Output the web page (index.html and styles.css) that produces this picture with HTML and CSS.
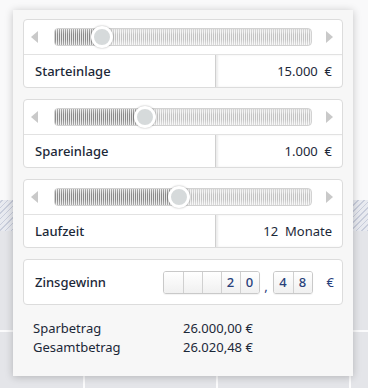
FILE: index.html
```html
<!DOCTYPE html>
<html lang="de">
<head>
<meta charset="utf-8">
<link rel="stylesheet" href="styles.css">
</head>
<body>
<div class="panel">
  <div class="card">
    <div class="slider-row">
      <span class="arrow arrow-left"></span>
      <div class="track">
        <div class="fill" style="width:47px"></div>
        <span class="thumb" style="left:47px"></span>
      </div>
      <span class="arrow arrow-right"></span>
    </div>
    <div class="input-row">
      <span class="label">Starteinlage</span>
      <span class="value">15.000&nbsp;&nbsp;€</span>
    </div>
  </div>
  <div class="card">
    <div class="slider-row">
      <span class="arrow arrow-left"></span>
      <div class="track">
        <div class="fill" style="width:90px"></div>
        <span class="thumb" style="left:90px"></span>
      </div>
      <span class="arrow arrow-right"></span>
    </div>
    <div class="input-row">
      <span class="label">Spareinlage</span>
      <span class="value">1.000&nbsp;&nbsp;€</span>
    </div>
  </div>
  <div class="card">
    <div class="slider-row">
      <span class="arrow arrow-left"></span>
      <div class="track">
        <div class="fill" style="width:124px"></div>
        <span class="thumb" style="left:124px"></span>
      </div>
      <span class="arrow arrow-right"></span>
    </div>
    <div class="input-row">
      <span class="label">Laufzeit</span>
      <span class="value">12&nbsp;&nbsp;Monate</span>
    </div>
  </div>
  <div class="card result">
    <span class="label">Zinsgewinn</span>
    <div class="digits">
      <span class="digit"></span><span class="digit"></span><span class="digit"></span><span class="digit">2</span><span class="digit">0</span>
    </div>
    <span class="comma">,</span>
    <div class="digits">
      <span class="digit">4</span><span class="digit">8</span>
    </div>
    <span class="euro">€</span>
  </div>
  <div class="summary">
    <span>Sparbetrag</span><span>26.000,00 €</span>
    <span>Gesamtbetrag</span><span>26.020,48 €</span>
  </div>
</div>
</body>
</html>
```
FILE: styles.css
```css
* { box-sizing: border-box; }
html, body { margin: 0; padding: 0; }
body {
  width: 368px;
  height: 388px;
  overflow: hidden;
  font-family: "Noto Sans", "Open Sans", sans-serif;
  color: #1c2838;
  background:
    repeating-linear-gradient(90deg, transparent 0 83px, #fbfbfc 83px 85px, transparent 85px 133px) 0 232px / 100% 156px no-repeat,
    linear-gradient(#fbfbfc, #fbfbfc) 0 330px / 100% 2px no-repeat,
    repeating-linear-gradient(-45deg, #c8cddb 0 1px, #e8eaf0 1px 4px) 0 200px / 100% 31px no-repeat,
    linear-gradient(#e4e5e9, #e4e5e9) 0 231px / 100% 157px no-repeat,
    #f9f9fa;
}
.panel {
  margin: 10px 0 0 13px;
  width: 340px;
  height: 366px;
  padding: 9px 10px 0;
  background: #f7f7f7;
  box-shadow: 0 1px 8px rgba(0, 0, 0, 0.22);
  display: flex;
  flex-direction: column;
  gap: 11px;
}
.card {
  background: #fff;
  border: 1px solid #dcdcdc;
  border-radius: 4px;
}
.slider-row {
  height: 35px;
  border-bottom: 1px solid #e2e2e2;
  display: flex;
  align-items: center;
  padding: 0 7px;
}
.arrow {
  width: 0;
  height: 0;
  border-top: 6px solid transparent;
  border-bottom: 6px solid transparent;
}
.arrow-left { border-right: 7px solid #c9c9c9; }
.arrow-right { border-left: 7px solid #c9c9c9; margin-left: 14px; }
.track {
  position: relative;
  margin-left: 16px;
  width: 258px;
  height: 18px;
  border: 1px solid #d2d2d2;
  border-radius: 4px;
  background:
    linear-gradient(rgba(255,255,255,0.5), rgba(255,255,255,0) 35%, rgba(255,255,255,0) 65%, rgba(255,255,255,0.45)),
    repeating-linear-gradient(90deg, #c4c4c4 0 1px, #f3f3f3 1px 2px);
  box-shadow: inset 0 1px 2px rgba(0,0,0,0.08);
}
.fill {
  height: 100%;
  border-radius: 3px 0 0 3px;
  background:
    linear-gradient(rgba(255,255,255,0.3), rgba(255,255,255,0) 35%, rgba(255,255,255,0) 65%, rgba(255,255,255,0.3)),
    repeating-linear-gradient(90deg, #8a8a8a 0 1px, #e6e6e6 1px 2px);
}
.thumb {
  position: absolute;
  top: 50%;
  width: 22px;
  height: 22px;
  margin: -11px 0 0 -11px;
  border-radius: 50%;
  background: #d6dadb;
  border: 3px solid #fff;
  box-shadow: 0 0 2px rgba(0,0,0,0.35);
}
.input-row {
  height: 32px;
  display: flex;
  align-items: stretch;
}
.label {
  flex: 1;
  padding-left: 11px;
  font-size: 13px;
  font-weight: 500;
  display: flex;
  align-items: center;
  color: #1c2838;
}
.value {
  width: 127px;
  border-left: 1px solid #cfcfcf;
  box-shadow: inset 2px 0 2px rgba(0,0,0,0.08);
  display: flex;
  align-items: center;
  justify-content: flex-end;
  padding-right: 10px;
  font-size: 13px;
  color: #1c2838;
}
.result {
  height: 46px;
  display: flex;
  align-items: center;
  padding-right: 8px;
}
.digits {
  display: flex;
  height: 23px;
  border: 1px solid #c9c9c9;
  border-radius: 3px;
  overflow: hidden;
  box-shadow: 0 1px 1px rgba(0,0,0,0.05);
}
.digit {
  width: 19px;
  height: 100%;
  border-left: 1px solid #d0d0d0;
  background: linear-gradient(#ffffff, #f0f0f0);
  display: flex;
  align-items: center;
  justify-content: center;
  font-size: 13px;
  font-weight: 500;
  color: #28407a;
}
.digit:first-child { border-left: none; }
.comma {
  width: 13px;
  text-align: center;
  font-size: 13px;
  color: #28407a;
  align-self: flex-end;
  padding-bottom: 9px;
}
.euro {
  margin-left: 14px;
  font-size: 13px;
  color: #28407a;
}
.summary {
  margin-top: 3px;
  padding-left: 10px;
  display: grid;
  grid-template-columns: 150px auto;
  font-size: 13px;
  line-height: 19px;
  color: #1c2838;
}
```
